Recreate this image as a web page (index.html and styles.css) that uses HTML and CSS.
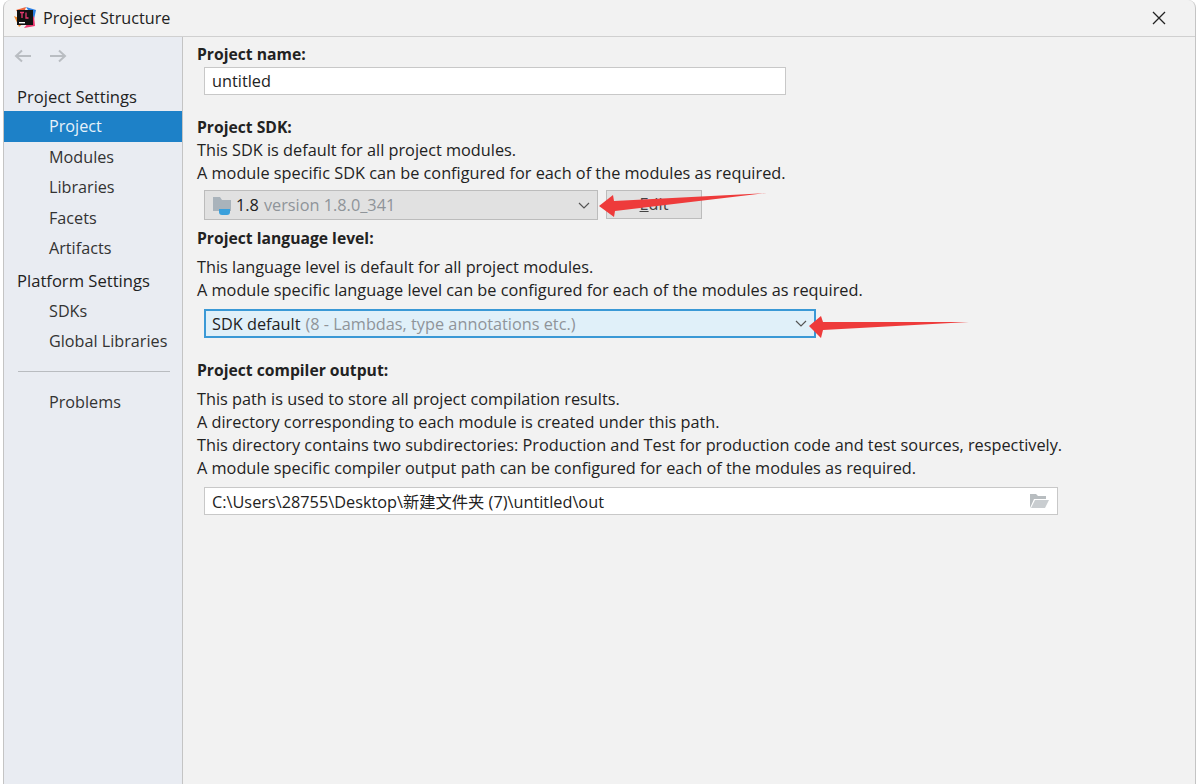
FILE: index.html
```html
<!DOCTYPE html>
<html lang="en">

<head>
    <meta charset="UTF-8">
    <title>Project Structure</title>

    <link rel="stylesheet" href="styles.css">
</head>

<body>
    <div class="window">
        <div class="titlebar">
            <svg class="app-icon" width="22" height="22" viewBox="0 0 22 22">
                <path d="M2 3 L12 0 L8 12 Z" fill="#f0663a"/>
                <path d="M0 9 L5 20 L12 14 Z" fill="#ef8a2c"/>
                <path d="M12 0 L22 3 L20 12 Z" fill="#2a7de1"/>
                <path d="M10 21 L21 19 L20 9 Z" fill="#e9386f"/>
                <rect x="3" y="3" width="16" height="15" fill="#111"/>
                <rect x="5" y="15" width="6" height="1.4" fill="#fff"/>
                <path d="M6 5.5 H10 M8 5.5 V11 M12 5.5 V11 H14.5" stroke="#e8396f" stroke-width="1.3" fill="none"/>
            </svg>
            <span class="title">Project Structure</span>
            <svg class="close" width="14" height="14" viewBox="0 0 14 14">
                <path d="M1 1 L13 13 M13 1 L1 13" stroke="#222" stroke-width="1.3"/>
            </svg>
        </div>

        <div class="main">
            <div class="sidebar">
                <div class="nav-arrows">
                    <svg width="18" height="14" viewBox="0 0 18 14">
                        <path d="M17 7 H2 M8 1.5 L2 7 L8 12.5" stroke="#b9bdc2" stroke-width="2" fill="none"/>
                    </svg>
                    <svg width="18" height="14" viewBox="0 0 18 14">
                        <path d="M1 7 H16 M10 1.5 L16 7 L10 12.5" stroke="#b9bdc2" stroke-width="2" fill="none"/>
                    </svg>
                </div>
                <div class="group first">Project Settings</div>
                <div class="item active">Project</div>
                <div class="item">Modules</div>
                <div class="item">Libraries</div>
                <div class="item">Facets</div>
                <div class="item">Artifacts</div>
                <div class="group">Platform Settings</div>
                <div class="item">SDKs</div>
                <div class="item">Global Libraries</div>
                <div class="divider"></div>
                <div class="item">Problems</div>
            </div>

            <div class="content">
                <div class="label name-label">Project name:</div>
                <div class="field name-field">untitled</div>

                <div class="label sdk-label">Project SDK:</div>
                <div class="line">This SDK is default for all project modules.</div>
                <div class="line">A module specific SDK can be configured for each of the modules as required.</div>
                <div class="sdk-row">
                    <div class="combo sdk-combo">
                        <svg class="sdk-icon" width="22" height="22" viewBox="0 0 22 22">
                            <path d="M1 3 H8 L10 6 H19 V17 H1 Z" fill="#a9b3bb"/>
                            <path d="M7 15 H18 V18 Q18 21 15 21 H10 Q7 21 7 18 Z" fill="#3aa0dc"/>
                        </svg>
                        <span class="dark">1.8</span>
                        <span class="muted">version 1.8.0_341</span>
                        <svg class="chevron" width="12" height="7" viewBox="0 0 12 7">
                            <path d="M1 1 L6 6 L11 1" stroke="#555" stroke-width="1.2" fill="none"/>
                        </svg>
                    </div>
                    <div class="edit-btn"><u>E</u>dit</div>
                </div>

                <div class="label level-label">Project language level:</div>
                <div class="line level-first">This language level is default for all project modules.</div>
                <div class="line">A module specific language level can be configured for each of the modules as required.</div>
                <div class="combo level-combo">
                    <span class="dark">SDK default</span>
                    <span class="muted">(8 - Lambdas, type annotations etc.)</span>
                    <svg class="chevron" width="12" height="7" viewBox="0 0 12 7">
                        <path d="M1 1 L6 6 L11 1" stroke="#555" stroke-width="1.2" fill="none"/>
                    </svg>
                </div>

                <div class="label output-label">Project compiler output:</div>
                <div class="line level-first">This path is used to store all project compilation results.</div>
                <div class="line">A directory corresponding to each module is created under this path.</div>
                <div class="line">This directory contains two subdirectories: Production and Test for production code and test sources, respectively.</div>
                <div class="line">A module specific compiler output path can be configured for each of the modules as required.</div>
                <div class="field output-field">
                    <span>C:\Users\28755\Desktop\新建文件夹 (7)\untitled\out</span>
                    <svg width="20" height="16" viewBox="0 0 20 16">
                        <path d="M1 15 V1 H7 L9 3 H17 V6 H5 L1 15 Z" fill="#b8bdc0"/>
                        <path d="M2 15 L6 7 H20 L16 15 Z" fill="#c9cdd0"/>
                    </svg>
                </div>
            </div>
        </div>

        <svg class="arrow arrow-sdk" width="170" height="26" viewBox="0 0 170 26">
            <path d="M0 13 L14 2 L15 8 L168 0 L16 18 L15 24 Z" fill="#ee3b3b"/>
        </svg>
        <svg class="arrow arrow-level" width="162" height="24" viewBox="0 0 162 24">
            <path d="M0 11 L12 1 L14 7 L160 7 L14 15 L12 23 Z" fill="#ee3b3b"/>
        </svg>
    </div>
</body>

</html>
```

FILE: styles.css
```css
body {
    margin: 0;
    background-color: #fff;
    font-family: "Open Sans", "Noto Sans CJK SC", sans-serif;
    font-size: 16.3px;
    color: #222;
}

.window {
    position: relative;
    width: 1191px;
    height: 784px;
    margin-left: 3px;
    background-color: #f2f2f2;
    border-left: 1px solid #c4c4c4;
    border-right: 1px solid #c4c4c4;
    border-top-left-radius: 8px;
    border-top-right-radius: 8px;
    overflow: hidden;
}

.titlebar {
    display: flex;
    align-items: center;
    height: 36px;
    border-bottom: 1px solid #d0d0d0;
    padding-left: 10px;
    padding-right: 29px;
}

.title {
    margin-left: 7px;
    font-size: 16.2px;
}

.close {
    margin-left: auto;
}

.main {
    display: flex;
    height: 747px;
}

.sidebar {
    width: 178px;
    background-color: #e9ecf2;
    border-right: 1px solid #c4c4c4;
    flex-shrink: 0;
}

.nav-arrows {
    display: flex;
    gap: 17px;
    padding: 12px 0 0 10px;
    height: 22px;
}

.group {
    height: 23px;
    line-height: 23px;
    padding-left: 13px;
    margin-top: 5px;
    margin-bottom: 4px;
    font-size: 16.6px;
}

.group.first {
    margin-top: 14px;
    margin-bottom: 3px;
}

.item {
    height: 30.4px;
    line-height: 30.4px;
    padding-left: 45px;
    font-size: 16.2px;
    color: #333;
}

.item.active {
    height: 31px;
    line-height: 31px;
    background-color: #1d81c8;
    color: #e6f2fa;
}

.divider {
    height: 1px;
    margin: 15px 12px 15px 14px;
    background-color: #b9bcc0;
}

.content {
    flex: 1;
    padding: 0 0 0 14px;
}

.label {
    font-weight: 700;
    height: 23px;
    line-height: 23px;
    font-size: 15.7px;
}

.name-label {
    margin-top: 6px;
}

.sdk-label {
    margin-top: 21px;
}

.level-label {
    margin-top: 7px;
}

.output-label {
    margin-top: 21px;
}

.line {
    height: 23px;
    line-height: 23px;
}

.level-first {
    margin-top: 6px;
}

.field {
    display: flex;
    align-items: center;
    box-sizing: border-box;
    margin-left: 7px;
    padding-left: 7px;
    background-color: #fff;
    border: 1px solid #c8c8c8;
}

.name-field {
    width: 582px;
    height: 28px;
    margin-top: 1px;
}

.output-field {
    width: 854px;
    height: 28px;
    margin-top: 7px;
    justify-content: space-between;
    padding-right: 8px;
}

.sdk-row {
    display: flex;
    gap: 8px;
    margin: 5px 0 0 7px;
}

.combo {
    display: flex;
    align-items: center;
    gap: 5px;
    box-sizing: border-box;
    height: 30px;
    padding-left: 7px;
    padding-right: 7px;
}

.sdk-combo {
    width: 394px;
    background-color: #e1e1e1;
    border: 1px solid #bcbcbc;
}

.sdk-icon {
    margin-right: -3px;
}

.level-combo {
    width: 612px;
    height: 29px;
    margin: 7px 0 0 7px;
    padding-left: 6px;
    background-color: #e0f0f9;
    border: 2px solid #3a99d6;
}

.chevron {
    margin-left: auto;
}

.dark {
    color: #222;
}

.muted {
    color: #8f9499;
}

.edit-btn {
    box-sizing: border-box;
    width: 96px;
    height: 29px;
    line-height: 27px;
    text-align: center;
    background-color: #e1e1e1;
    border: 1px solid #bcbcbc;
    color: #444;
}

.arrow {
    position: absolute;
}

.arrow-sdk {
    left: 595px;
    top: 193px;
}

.arrow-level {
    left: 805px;
    top: 315px;
}
```
